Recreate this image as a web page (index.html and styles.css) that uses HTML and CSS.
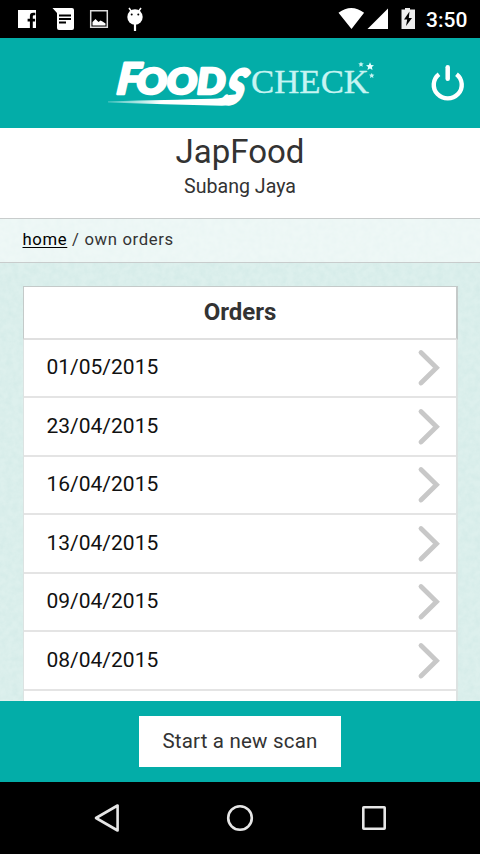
FILE: index.html
```html
<!DOCTYPE html>
<html lang="en">
<head>
<meta charset="utf-8">
<title>FoodsCheck - Orders</title>
<link rel="stylesheet" href="styles.css">
</head>
<body>
<div class="status">
  <svg class="status-left" width="160" height="38" viewBox="0 0 160 38">
    <path fill="#fff" d="M18 10h18v18h-3.200v-6.500h2.300v-2.700h-2.300v-2.300q0-1.300 1.300-1.300h1.200v-2.500h-2.200q-3.200 0-3.200 3.300v2.800h-2.300v2.700h2.300V28H18z"/>
    <path fill="#fff" d="M52.500 8H72q2 0 2 2v18q0 2-2 2H59q-2 0-2-2V13z"/>
    <path stroke="#000" stroke-width="2" d="M59 15.500h12M59 19h12M59 22.500h7"/>
    <path fill="none" stroke="#ddd" stroke-width="1.500" d="M90.700 10.700h16.600v16.600H90.700z"/>
    <path fill="#fff" d="M92.500 25.500v-3.500l3-3 3 3 2-1.500 2 1 3 2v2z"/>
    <circle cx="135" cy="17" r="7.700" fill="#fff"/>
    <path stroke="#fff" stroke-width="1.500" d="M131.500 11.500l-2.500-3.500M138.500 11.500l2.500-3.500"/>
    <path stroke="#fff" stroke-width="2.200" d="M135 23v8"/>
    <circle cx="131.700" cy="14.500" r="1" /><circle cx="138.300" cy="14.500" r="1"/>
  </svg>
  <svg class="status-right" width="90" height="38" viewBox="335 0 90 38">
    <path fill="#fff" d="M338.500 12.700q12.800-9.400 25.600 0L351.500 29zM367.500 29H388V8.500z"/>
    <path fill="#eee" d="M401.500 9.500h3.500V8h5v1.500h5V29h-13.500z"/>
    <path fill="#000" d="M409.500 11.500l-5.500 8h3.200l-1.200 6.500 6-8h-3.200z"/>
  </svg>
  <span class="clock">3:50</span>
</div>
<header class="brand">
  <svg class="logo" width="270" height="50" viewBox="108 57 270 50">
    <defs>
      <linearGradient id="swoosh"><stop offset="0" stop-color="#fff" stop-opacity=".25"/><stop offset=".4" stop-color="#fff"/></linearGradient>
    </defs>
    <g class="foods">
      <text transform="translate(116 93.500) skewX(-6)" font-size="43" textLength="23" lengthAdjust="spacingAndGlyphs">F</text>
      <text x="136.500" y="94" font-size="35.500" textLength="89" lengthAdjust="spacingAndGlyphs">OOD</text>
      <text transform="translate(221 104) skewX(-16)" font-size="48" textLength="20" lengthAdjust="spacingAndGlyphs">S</text>
    </g>
    <path fill="url(#swoosh)" d="M108 101.300Q170 100 212 98.800Q224 98.500 229 95L240 94Q237 105.800 222 105.800Q165 104.500 108 102.500z"/>
    <text class="check" x="251" y="93" textLength="118" lengthAdjust="spacingAndGlyphs">CHECK</text>
    <path fill="#e4ffff" d="M370 62.300l1.200 2.600 2.800.3-2.100 1.900.6 2.800-2.500-1.400-2.500 1.400.6-2.800-2.100-1.900 2.800-.3z"/>
    <path fill="#c6f4f2" d="M361 61.700l.8 1.600 1.900.2-1.400 1.300.4 1.900-1.700-.9-1.700.9.400-1.900-1.400-1.300 1.900-.2zM371.700 72.900l.8 1.600 1.900.2-1.400 1.300.4 1.900-1.700-.9-1.700.9.400-1.900-1.400-1.300 1.900-.2z"/>
  </svg>
  <svg class="power" width="34" height="38" viewBox="431 64 34 38">
    <path fill="none" stroke="#fff" stroke-width="4.400" d="M439 74.200a14 13.600 0 1 0 17.500 0"/>
    <path stroke="#fff" stroke-width="4.500" stroke-linecap="round" d="M447.700 67.200v11.500"/>
  </svg>
</header>
<section class="place">
  <h1>JapFood</h1>
  <p>Subang Jaya</p>
</section>
<main class="content">
  <svg class="paper" width="480" height="482">
    <filter id="grain" x="0" y="0" width="100%" height="100%">
      <feTurbulence type="fractalNoise" baseFrequency=".16" numOctaves="4" seed="4"/>
      <feColorMatrix values="0 0 0 0 .55  0 0 0 0 .76  0 0 0 0 .74  .55 0 0 0 -.16"/>
    </filter>
    <rect width="480" height="482" filter="url(#grain)"/>
  </svg>
  <nav class="crumbs"><a href="#">home</a> / own orders</nav>
  <section class="orders">
    <h2>Orders</h2>
    <ul>
      <li>01/05/2015<svg class="chevron" viewBox="0 0 24 40"><path d="M4 5.500L19.500 20.800 4 36"/></svg></li>
      <li>23/04/2015<svg class="chevron" viewBox="0 0 24 40"><path d="M4 5.500L19.500 20.800 4 36"/></svg></li>
      <li>16/04/2015<svg class="chevron" viewBox="0 0 24 40"><path d="M4 5.500L19.500 20.800 4 36"/></svg></li>
      <li>13/04/2015<svg class="chevron" viewBox="0 0 24 40"><path d="M4 5.500L19.500 20.800 4 36"/></svg></li>
      <li>09/04/2015<svg class="chevron" viewBox="0 0 24 40"><path d="M4 5.500L19.500 20.800 4 36"/></svg></li>
      <li>08/04/2015<svg class="chevron" viewBox="0 0 24 40"><path d="M4 5.500L19.500 20.800 4 36"/></svg></li>
      <li></li>
    </ul>
  </section>
</main>
<footer class="actions"><button class="scan">Start a new scan</button></footer>
<div class="system">
  <svg width="480" height="72" viewBox="0 782 480 72">
    <g fill="none" stroke="#e6e6e6" stroke-width="2.600" stroke-linejoin="round">
      <path d="M117.600 805.500v25L96 818z"/>
      <circle cx="240" cy="818" r="11.800"/>
      <rect x="363.300" y="807.300" width="21.400" height="21.400" rx=".5"/>
    </g>
  </svg>
</div>
</body>
</html>
```
FILE: styles.css
```css
* { box-sizing: border-box; }
body {
  margin: 0;
  width: 480px;
  height: 854px;
  display: flex;
  flex-direction: column;
  overflow: hidden;
  font-family: Roboto, "Liberation Sans", sans-serif;
  color: #333;
}
svg { display: block; flex: none; }
h1, h2, p, ul { margin: 0; padding: 0; font-weight: 400; }
.status {
  flex: none;
  height: 38px;
  display: flex;
  background: #000;
  color: #fff;
}
.status-right { margin-left: 175px; }
.clock {
  font-size: 21px;
  font-weight: 500;
  line-height: 40px;
  margin-left: 1px;
}
.brand {
  flex: none;
  height: 90px;
  display: flex;
  align-items: flex-start;
  padding: 19px 15px 0 108px;
  background: #03ada8;
}
.logo { overflow: visible; }
.power { margin: 7px 0 0 53px; }
.foods {
  font-family: Lato, sans-serif;
  font-weight: 900;
  font-style: italic;
  fill: #fff;
  stroke: #fff;
  stroke-width: 2.600px;
  stroke-linejoin: round;
}
.check {
  font-family: "Liberation Serif", serif;
  font-size: 34px;
  fill: #c6f4f2;
  stroke: #c6f4f2;
  stroke-width: .3px;
}
.place {
  flex: none;
  height: 90px;
  text-align: center;
  background: #fff;
}
.place h1 {
  font-size: 33px;
  line-height: 40px;
  padding-top: 4px;
}
.place p {
  font-size: 19.600px;
  line-height: 24px;
  padding-top: 3px;
}
.content {
  flex: none;
  height: 483px;
  position: relative;
  overflow: hidden;
  background: #ddf0ed;
}
.paper { position: absolute; left: 0; top: 0; }
.crumbs {
  position: relative;
  height: 45px;
  padding: 0 22.500px;
  border-top: 1px solid #c8cccc;
  border-bottom: 1px solid #c8cccc;
  background: rgba(255, 255, 255, .5);
  font-size: 16.700px;
  letter-spacing: .65px;
  line-height: 41px;
}
.crumbs a {
  color: #000;
  text-underline-offset: 2px;
}
.orders {
  position: relative;
  margin: 23px 22px 0 23px;
  background: #fff;
  border: 1px solid #dce3e2;
  border-right-width: 2px;
}
.orders h2 {
  height: 53.700px;
  margin: -1px -2px -1px -1px;
  font-size: 24px;
  font-weight: 700;
  line-height: 51px;
  text-align: center;
  border: 1px solid #c4cac9;
  border-right-width: 2px;
  border-bottom: 2px solid #e0e0e0;
}
.orders ul { list-style: none; margin-top: 1px; }
.orders li {
  height: 58.500px;
  padding: 0 15px 1.400px 22.500px;
  display: flex;
  align-items: center;
  justify-content: space-between;
  font-size: 21px;
  color: #111;
  border-bottom: 2px solid #e4e4e4;
}
.chevron { width: 24px; height: 40px; }
.chevron path {
  fill: none;
  stroke: #c8c8c8;
  stroke-width: 4.800px;
  stroke-linecap: round;
}
.actions {
  flex: none;
  height: 81px;
  display: flex;
  justify-content: center;
  align-items: center;
  background: #03ada8;
}
.scan {
  width: 202px;
  height: 51px;
  padding: 0 0 2px;
  border: 0;
  background: #fff;
  font-family: inherit;
  font-size: 20.500px;
  letter-spacing: .2px;
  color: #333;
}
.system { flex: none; height: 72px; background: #000; }
```
